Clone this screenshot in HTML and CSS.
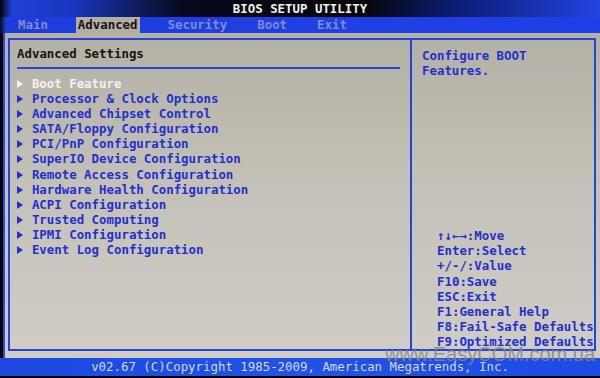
FILE: index.html
```html
<!DOCTYPE html>
<html lang="en">
<head>
  <meta charset="UTF-8">
  <meta name="viewport" content="width=device-width, initial-scale=1.0">
  <title>BIOS Setup Utility</title>
  <link rel="stylesheet" href="styles.css">
</head>
<body>
  <div class="screen">
    <div class="titlebar">BIOS SETUP UTILITY</div>

    <div class="menubar">
      <span class="tab">Main</span>
      <span class="tab active">Advanced</span>
      <span class="tab">Security</span>
      <span class="tab">Boot</span>
      <span class="tab">Exit</span>
    </div>

    <div class="content">
      <div class="frame">
        <div class="settings">
          <div class="heading">Advanced Settings</div>
          <ul class="items">
            <li class="item selected"><span class="arrow"></span>Boot Feature</li>
            <li class="item"><span class="arrow"></span>Processor &amp; Clock Options</li>
            <li class="item"><span class="arrow"></span>Advanced Chipset Control</li>
            <li class="item"><span class="arrow"></span>SATA/Floppy Configuration</li>
            <li class="item"><span class="arrow"></span>PCI/PnP Configuration</li>
            <li class="item"><span class="arrow"></span>SuperIO Device Configuration</li>
            <li class="item"><span class="arrow"></span>Remote Access Configuration</li>
            <li class="item"><span class="arrow"></span>Hardware Health Configuration</li>
            <li class="item"><span class="arrow"></span>ACPI Configuration</li>
            <li class="item"><span class="arrow"></span>Trusted Computing</li>
            <li class="item"><span class="arrow"></span>IPMI Configuration</li>
            <li class="item"><span class="arrow"></span>Event Log Configuration</li>
          </ul>
        </div>

        <div class="help">
          <div class="desc">Configure BOOT<br>Features.</div>
          <div class="keys">
            <div>↑↓←→:Move</div>
            <div>Enter:Select</div>
            <div>+/-/:Value</div>
            <div>F10:Save</div>
            <div>ESC:Exit</div>
            <div>F1:General Help</div>
            <div>F8:Fail-Safe Defaults</div>
            <div>F9:Optimized Defaults</div>
          </div>
        </div>
      </div>
    </div>

    <div class="statusbar">v02.67 (C)Copyright 1985-2009, American Megatrends, Inc.</div>

    <!-- photo watermark over the bottom edge -->
    <div class="watermark">www.EasyCOM.com.ua</div>
  </div>
</body>
</html>
```

FILE: styles.css
```css
body {
  margin: 0;
  background-color: #050505;
  font-family: "DejaVu Sans Mono", "Liberation Mono", monospace;
  font-weight: bold;
  font-size: 12.4px;
  line-height: 15px;
}

.screen {
  position: relative;
  width: 600px;
  height: 378px;
  overflow: hidden;
}

.titlebar {
  height: 17px;
  line-height: 18px;
  text-align: center;
  color: #f0f0f0;
  background: linear-gradient(90deg, #050505 0, #2140d6 2%, #1a36c0 12%, #070a1e 30%, #050505 60%, #0c1a70 75%, #2244e0 100%);
}

.menubar {
  display: flex;
  gap: 26px;
  height: 16px;
  padding-left: 16px;
  background: linear-gradient(90deg, #0a0a14 0, #1e3cdc 1%, #1f40e4 50%, #1d3fe6 100%);
}

.tab {
  padding: 0 2px;
  line-height: 16px;
  color: #7f8ccc;
}

.tab.active {
  background-color: #b2afa2;
  color: #151515;
}

.content {
  height: 325px;
  box-sizing: border-box;
  margin-left: 3px;
  padding: 5px 4px 7px 3px;
  border-left: 2px solid #2a48e0;
  background: linear-gradient(180deg, #b3b0a4 0, #c3c1b7 45%, #cfcdc5 100%);
}

.frame {
  display: flex;
  height: 313px;
  box-sizing: border-box;
  border: 2px solid #2443d8;
}

.settings {
  flex: 1;
  padding: 6px 10px 0 7px;
}

.heading {
  color: #141414;
  padding-bottom: 6px;
  border-bottom: 2px solid #2a46d6;
}

.items {
  list-style: none;
  margin: 7px 0 0;
  padding: 0;
}

.item {
  color: #1f30d0;
  line-height: 15.1px;
}

.item.selected {
  color: #f2f2f2;
}

.arrow {
  display: inline-block;
  width: 2ch;
}

.arrow::before {
  content: "";
  display: inline-block;
  border-left: 6px solid currentColor;
  border-top: 4px solid transparent;
  border-bottom: 4px solid transparent;
}

.help {
  display: flex;
  flex-direction: column;
  width: 184px;
  box-sizing: border-box;
  border-left: 2px solid #2443d8;
  color: #1f30d0;
}

.desc {
  padding: 8px 10px 0;
}

.keys {
  margin-top: auto;
  padding-left: 25px;
  line-height: 15.1px;
}

.statusbar {
  height: 18px;
  line-height: 18px;
  text-align: center;
  color: #d4d8ea;
  font-weight: normal;
  background: linear-gradient(90deg, #1c48e0 0, #2052ea 50%, #1d4ce4 100%);
}

.watermark {
  position: absolute;
  left: 385px;
  top: 344px;
  font-family: "Liberation Sans", Arial, sans-serif;
  font-weight: normal;
  font-size: 20px;
  line-height: 20px;
  color: rgba(135, 135, 135, 0.85);
}
```
